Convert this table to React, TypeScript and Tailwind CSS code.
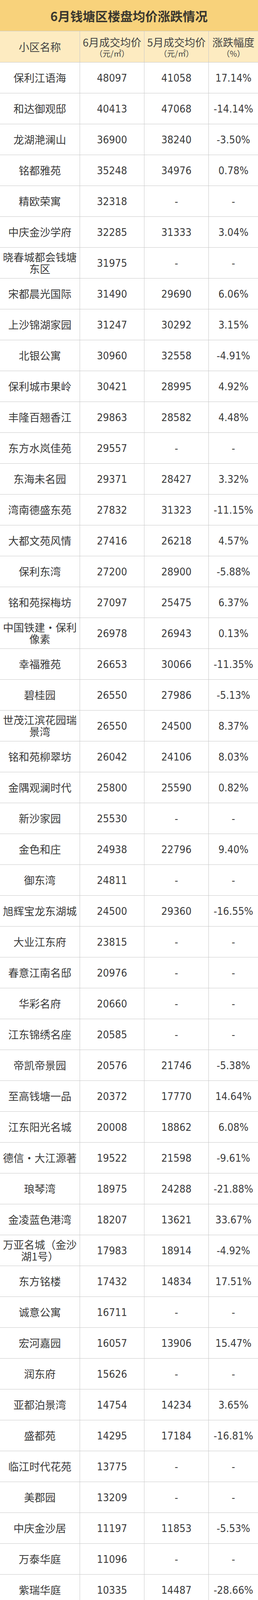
import * as React from "react"

type Row = [name: string, june: string, may: string, change: string]

const ROWS: Row[] = [
  ["保利江语海", "48097", "41058", "17.14%"],
  ["和达御观邸", "40413", "47068", "-14.14%"],
  ["龙湖滟澜山", "36900", "38240", "-3.50%"],
  ["铭都雅苑", "35248", "34976", "0.78%"],
  ["精欧荣寓", "32318", "-", "-"],
  ["中庆金沙学府", "32285", "31333", "3.04%"],
  ["晓春城都会钱塘东区", "31975", "-", "-"],
  ["宋都晨光国际", "31490", "29690", "6.06%"],
  ["上沙锦湖家园", "31247", "30292", "3.15%"],
  ["北银公寓", "30960", "32558", "-4.91%"],
  ["保利城市果岭", "30421", "28995", "4.92%"],
  ["丰隆百翘香江", "29863", "28582", "4.48%"],
  ["东方水岚佳苑", "29557", "-", "-"],
  ["东海未名园", "29371", "28427", "3.32%"],
  ["湾南德盛东苑", "27832", "31323", "-11.15%"],
  ["大都文苑风情", "27416", "26218", "4.57%"],
  ["保利东湾", "27200", "28900", "-5.88%"],
  ["铭和苑探梅坊", "27097", "25475", "6.37%"],
  ["中国铁建·保利像素", "26978", "26943", "0.13%"],
  ["幸福雅苑", "26653", "30066", "-11.35%"],
  ["碧桂园", "26550", "27986", "-5.13%"],
  ["世茂江滨花园瑞景湾", "26550", "24500", "8.37%"],
  ["铭和苑柳翠坊", "26042", "24106", "8.03%"],
  ["金隅观澜时代", "25800", "25590", "0.82%"],
  ["新沙家园", "25530", "-", "-"],
  ["金色和庄", "24938", "22796", "9.40%"],
  ["御东湾", "24811", "-", "-"],
  ["旭辉宝龙东湖城", "24500", "29360", "-16.55%"],
  ["大业江东府", "23815", "-", "-"],
  ["春意江南名邸", "20976", "-", "-"],
  ["华彩名府", "20660", "-", "-"],
  ["江东锦绣名座", "20585", "-", "-"],
  ["帝凯帝景园", "20576", "21746", "-5.38%"],
  ["至高钱塘一品", "20372", "17770", "14.64%"],
  ["江东阳光名城", "20008", "18862", "6.08%"],
  ["德信·大江源著", "19522", "21598", "-9.61%"],
  ["琅琴湾", "18975", "24288", "-21.88%"],
  ["金凌蓝色港湾", "18207", "13621", "33.67%"],
  ["万亚名城（金沙湖1号）", "17983", "18914", "-4.92%"],
  ["东方铭楼", "17432", "14834", "17.51%"],
  ["诚意公寓", "16711", "-", "-"],
  ["宏河嘉园", "16057", "13906", "15.47%"],
  ["润东府", "15626", "-", "-"],
  ["亚都泊景湾", "14754", "14234", "3.65%"],
  ["盛都苑", "14295", "17184", "-16.81%"],
  ["临江时代花苑", "13775", "-", "-"],
  ["美郡园", "13209", "-", "-"],
  ["中庆金沙居", "11197", "11853", "-5.53%"],
  ["万泰华庭", "11096", "-", "-"],
  ["紫瑞华庭", "10335", "14487", "-28.66%"],
]

const grid = "grid grid-cols-[205px_165px_165px_126px]"
const cell =
  "flex h-full items-center justify-center overflow-hidden text-center border-r border-[#c9c9c9] last:border-r-0 px-1"

const cjk = { fontFamily: '"Noto Sans CJK SC", "Noto Sans", sans-serif' }
const digits = {
  fontFamily: '"DejaVu Sans Condensed", "Noto Sans CJK SC", sans-serif',
}

export default function App() {
  return (
    <div
      className="w-[661px] overflow-hidden bg-white text-[#3b3b3b]"
      style={cjk}
    >
      <div className="flex h-[80px] items-center justify-center border-b border-[#c9c9c9] bg-[#f8d27b] text-[32px] font-bold leading-none text-[#3a372f]">
        6月钱塘区楼盘均价涨跌情况
      </div>

      <div
        className={`${grid} h-[80px] overflow-hidden border-b border-[#c9c9c9] bg-[#fdebc1] text-[#444]`}
      >
        <div className={`${cell} text-[27px] leading-none`}>小区名称</div>
        {["6月成交均价", "5月成交均价", "涨跌幅度"].map((label, i) => (
          <div key={label} className={`${cell} flex-col pt-1`}>
            <span className="text-[27px] leading-[30px]">{label}</span>
            <span className="text-[20px] leading-[28px]">
              {i < 2 ? "（元/㎡）" : "（%）"}
            </span>
          </div>
        ))}
      </div>

      {ROWS.map(([name, june, may, change]) => (
        <div
          key={name}
          className={`${grid} h-[79px] overflow-hidden border-b border-[#c9c9c9]`}
        >
          <div className={`${cell} text-[27px] leading-[30px]`}>{name}</div>
          <div className={`${cell} text-[27px] leading-none`} style={digits}>
            {june}
          </div>
          <div className={`${cell} text-[27px] leading-none`} style={digits}>
            {may}
          </div>
          <div className={`${cell} text-[27px] leading-none`} style={digits}>
            {change}
          </div>
        </div>
      ))}
    </div>
  )
}
